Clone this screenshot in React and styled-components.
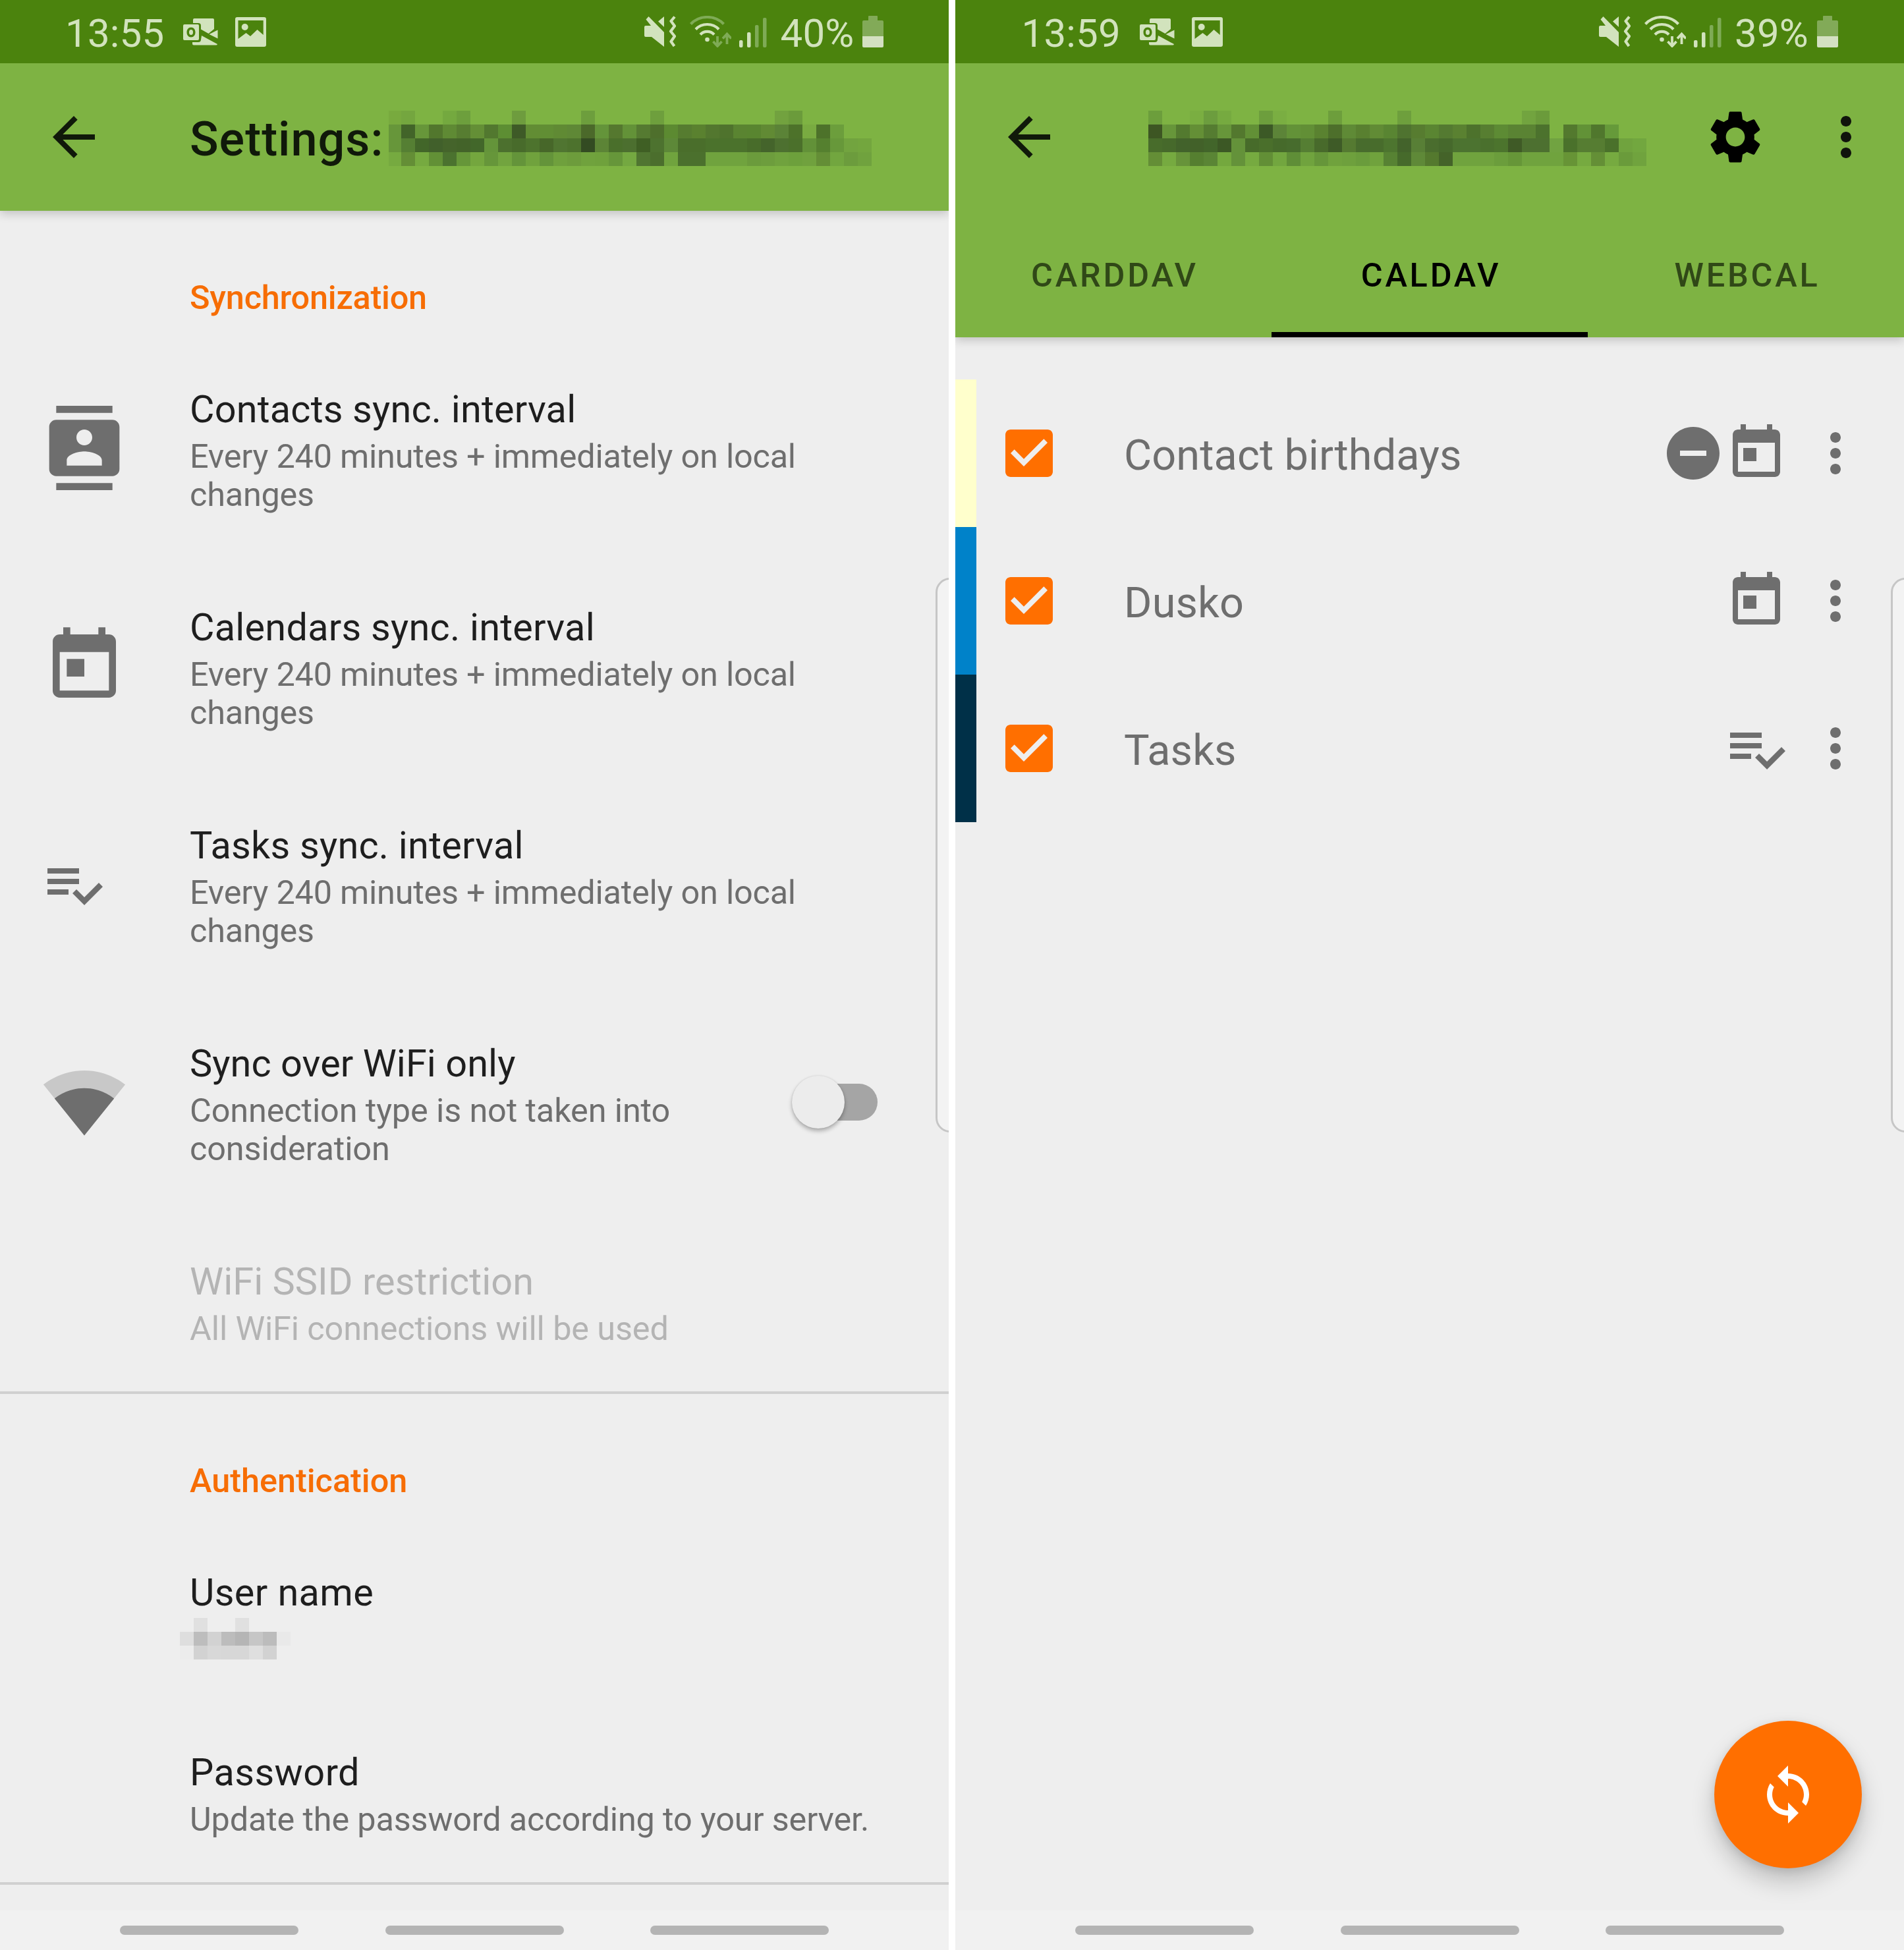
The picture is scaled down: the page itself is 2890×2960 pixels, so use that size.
import React from "react";
import styled, { createGlobalStyle } from "styled-components";

const GlobalStyle = createGlobalStyle`
  *, *::before, *::after { box-sizing: border-box; }
  body { margin: 0; background: #ffffff; }
  svg { display: block; flex: none; }
`;

const Screens = styled.main`
  display: flex;
  gap: 10px;
  width: 2890px;
  height: 2960px;
  font-family: Roboto, "Noto Sans", sans-serif;
  overflow: hidden;
`;

const Phone = styled.section`
  position: relative;
  display: flex;
  flex-direction: column;
  width: 1440px;
  height: 2960px;
  background: #eeeeee;
  overflow: hidden;
`;

/* Status bar */

const StatusBarRoot = styled.header`
  position: relative;
  z-index: 1;
  display: flex;
  align-items: center;
  flex: none;
  height: 96px;
  padding: 0 ${(p) => 99 + p.$inset}px 0 ${(p) => 99 + p.$inset}px;
  background: #4b830d;
  color: #d2e3bd;
`;

const StatusText = styled.span`
  width: ${(p) => p.$width}px;
  padding-top: 5px;
  font-size: 60px;
  line-height: 70px;
  letter-spacing: 0.2px;
  white-space: nowrap;
`;

const Notifications = styled.div`
  display: flex;
  align-items: center;
  gap: 26px;
  margin-left: 27px;
`;

const StatusIcons = styled.div`
  display: flex;
  align-items: center;
  margin-left: auto;
`;

const StatusGap = styled.i`
  width: ${(p) => p.$w}px;
`;

const DIM = "#7fab56";
const LIT = "#d2e3bd";

const OutlookIcon = () => (
  <svg width="53" height="41" viewBox="0 0 53 41" fill={LIT}>
    <path d="M15 2q0-2 2-2h28q2 0 2 2v14l-8.5 7L27 16.5V11q0-4-4-4h-8z" />
    <path fillRule="evenodd" d="M2 9h20q2 0 2 2v20q0 2-2 2H2q-2 0-2-2V11q0-2 2-2zm10 4.500c-4 0-6.500 3.200-6.500 7.500s2.500 7.500 6.500 7.500 6.500-3.200 6.500-7.500-2.500-7.500-6.500-7.500zm0 3.500c2 0 3 1.600 3 4s-1 4-3 4-3-1.600-3-4 1-4 3-4z" />
    <path d="M52.500 17.500v13L39.500 24z" />
    <path d="M28 26l24 13q-.5 1.500-2 1.500H16q-2 0-2-2V36h9q4 0 4-4z" />
  </svg>
);

const PictureIcon = () => (
  <svg width="47" height="45" viewBox="0 0 47 45" fill={LIT}>
    <path fillRule="evenodd" d="M3 0h41q3 0 3 3v39q0 3-3 3H3q-3 0-3-3V3q0-3 3-3zm1.500 5v28L16.500 24l6.500 5 10.500-10 9.200 8V5z" />
    <circle cx="14.700" cy="15" r="5" />
  </svg>
);

const VibrateIcon = () => (
  <svg width="48" height="48" viewBox="0 0 48 48" fill={LIT}>
    <path d="M2.500 5.500l4-4.500L30 25v22L11 32H2q-2 0-2-2V17q0-2 2-2h8z" />
    <path d="M30 1v16l-9-8.500z" />
    <path
      d="M46 1.500l-5.500 6.500 5.500 7.500-6 8 6 7.500-5.500 8 5 7"
      fill="none"
      stroke={LIT}
      strokeWidth="4.200"
      strokeLinejoin="round"
    />
  </svg>
);

const WifiStatusIcon = ({ full }) => {
  const faint = full ? LIT : DIM;
  return (
    <svg width="63" height="48" viewBox="0 0 63 48" fill="none" strokeWidth="4.200">
      <path d="M1.500 12.500C15-1.500 38-1.500 51.500 12.500" stroke={faint} />
      <path d="M9 20.500C18 10.500 35 10.500 44 20.500" stroke={LIT} />
      <path d="M16 28.500C21.500 22.300 31.500 22.300 37 28.500" stroke={LIT} />
      <circle cx="26.500" cy="36" r="3.300" fill={LIT} />
      <path d="M42 31v13M35.500 39l6.500 7 6.500-7" stroke={faint} strokeWidth="3.800" />
      <path d="M56.500 43V29M50 34.500l6.500-7 6.500 7" stroke={faint} strokeWidth="3.800" />
    </svg>
  );
};

const SignalIcon = () => (
  <svg width="42" height="48" viewBox="0 0 42 48">
    <rect x="0" y="37" width="5.500" height="11" rx="2" fill={LIT} />
    <rect x="12" y="25" width="5.500" height="23" rx="2" fill={LIT} />
    <rect x="24" y="14" width="5.500" height="34" rx="2" fill={DIM} />
    <rect x="36" y="3" width="5.500" height="45" rx="2" fill={DIM} />
  </svg>
);

const BatteryIcon = () => (
  <svg width="32" height="48" viewBox="0 0 32 48">
    <path d="M9 1q0-1 1-1h12q1 0 1 1v6h7q2 0 2 2v22H0V9q0-2 2-2h7z" fill="#82aa58" />
    <path d="M0 31h32v15q0 2-2 2H2q-2 0-2-2z" fill="#d4e0c2" />
  </svg>
);

const StatusBar = ({ time, battery, wifiFull, inset = 0 }) => (
  <StatusBarRoot $inset={inset}>
    <StatusText $width={152}>{time}</StatusText>
    <Notifications>
      <OutlookIcon />
      <PictureIcon />
    </Notifications>
    <StatusIcons>
      <VibrateIcon />
      <StatusGap $w={21} />
      <WifiStatusIcon full={wifiFull} />
      <StatusGap $w={12} />
      <SignalIcon />
      <StatusGap $w={20.5} />
      <StatusText $width={113}>{battery}</StatusText>
      <StatusGap $w={11.5} />
      <BatteryIcon />
    </StatusIcons>
  </StatusBarRoot>
);

/* Material icons on a 24-unit grid */

const paths = {
  back: "M20 11H7.830l5.590-5.590L12 4l-8 8 8 8 1.410-1.410L7.830 13H20v-2z",
  more: "M12 8c1.100 0 2-.9 2-2s-.9-2-2-2-2 .9-2 2 .9 2 2 2zm0 2c-1.100 0-2 .9-2 2s.9 2 2 2 2-.9 2-2-.9-2-2-2zm0 6c-1.100 0-2 .9-2 2s.9 2 2 2 2-.9 2-2-.9-2-2-2z",
  gear: "M19.140,12.940c0.040-0.300,0.060-0.610,0.060-0.940c0-0.320-0.020-0.640-0.070-0.940l2.030-1.580c0.180-0.140,0.230-0.410,0.120-0.610l-1.920-3.320c-0.120-0.220-0.370-0.290-0.590-0.220l-2.390,0.960c-0.500-0.380-1.030-0.700-1.620-0.940L14.400,2.810c-0.040-0.240-0.240-0.410-0.480-0.410h-3.840c-0.240,0-0.430,0.170-0.470,0.410L9.250,5.350C8.660,5.590,8.120,5.920,7.630,6.290L5.240,5.330c-0.220-0.080-0.470,0-0.590,0.220L2.740,8.870C2.620,9.080,2.660,9.340,2.860,9.480l2.030,1.580C4.840,11.360,4.800,11.690,4.800,12s0.020,0.640,0.070,0.940l-2.030,1.580c-0.180,0.140-0.230,0.410-0.120,0.610l1.920,3.320c0.120,0.220,0.370,0.290,0.590,0.220l2.390-0.960c0.500,0.380,1.030,0.700,1.620,0.940l0.360,2.540c0.050,0.240,0.240,0.410,0.480,0.410h3.840c0.240,0,0.440-0.170,0.470-0.410l0.360-2.540c0.590-0.240,1.130-0.560,1.620-0.940l2.390,0.960c0.220,0.080,0.470,0,0.590-0.220l1.920-3.320c0.120-0.220,0.070-0.470-0.120-0.610L19.140,12.940z M12,15.600c-1.980,0-3.600-1.620-3.600-3.600s1.620-3.600,3.600-3.600s3.600,1.620,3.600,3.600S13.980,15.600,12,15.600z",
  contacts:
    "M20 0H4v2h16V0zM4 24h16v-2H4v2zM20 4H4c-1.100 0-2 .9-2 2v12c0 1.100.9 2 2 2h16c1.100 0 2-.9 2-2V6c0-1.100-.9-2-2-2zm-8 2.750c1.240 0 2.250 1.010 2.250 2.250s-1.010 2.250-2.250 2.250S9.750 10.240 9.750 9 10.760 6.750 12 6.750zM17 17H7v-1.500c0-1.670 3.330-2.500 5-2.500s5 .83 5 2.500V17z",
  today:
    "M19 3h-1V1h-2v2H8V1H6v2H5c-1.110 0-1.990.9-1.990 2L3 19c0 1.100.89 2 2 2h14c1.100 0 2-.9 2-2V5c0-1.100-.9-2-2-2zm0 16H5V8h14v11zM7 10h5v5H7z",
  tasks:
    "M14 10H2v2h12v-2zm0-4H2v2h12V6zM2 16h8v-2H2v2zm19.500-4.500L23 13l-6.990 7-4.510-4.500L13 14l3.010 3 5.490-5.500z",
  readOnly:
    "M12 2C6.480 2 2 6.480 2 12s4.480 10 10 10 10-4.480 10-10S17.520 2 12 2zm5 11H7v-2h10v2z",
  checkbox:
    "M19 3H5c-1.110 0-2 .9-2 2v14c0 1.100.89 2 2 2h14c1.110 0 2-.9 2-2V5c0-1.100-.89-2-2-2zm-9 14l-5-5 1.410-1.410L10 14.170l7.590-7.590L19 8l-9 9z",
  sync: "M12 4V1L8 5l4 4V6c3.310 0 6 2.690 6 6 0 1.010-.25 1.970-.7 2.800l1.460 1.460C19.540 15.030 20 13.570 20 12c0-4.420-3.580-8-8-8zm0 14c-3.310 0-6-2.690-6-6 0-1.010.25-1.970.7-2.800L5.240 7.740C4.460 8.970 4 10.430 4 12c0 4.420 3.580 8 8 8v3l4-4-4-4v3z",
};

const Icon = ({ name, size = 96, color = "#6e6e6e" }) => (
  <svg width={size} height={size} viewBox="0 0 24 24" fill={color}>
    <path d={paths[name]} />
  </svg>
);

const WifiStrengthIcon = () => (
  <svg width="128" height="128" viewBox="0 0 24 24" fill="#6e6e6e">
    <path fill="#c8c8c8" d="M23.640 7c-.45-.34-4.930-4-11.640-4C5.280 3 .81 6.660.36 7l11.630 14.490.01.01.01-.01L23.640 7z" />
    <path d="M3.530 10.950l8.460 10.540.01.01.01-.01 8.460-10.540C20.040 10.620 16.810 8 12 8s-8.040 2.620-8.470 2.950z" />
  </svg>
);

/* Pixelated patches that hide private text */

const MosaicGrid = styled.div`
  display: grid;
  flex: none;
  grid-template-columns: ${(p) => p.$first}px repeat(${(p) => p.$cols - 1}, 21px);
  grid-auto-rows: 21px;
  margin-top: ${(p) => p.$top || 0}px;
  margin-left: ${(p) => p.$left || 0}px;
`;

const Mosaic = ({ rows, first = 21, left, top }) => {
  const grid = rows.map((row) => row.trim().split(/\s+/));
  return (
    <MosaicGrid $cols={grid[0].length} $first={first} $left={left} $top={top} aria-hidden="true">
      {grid.flat().map((c, i) => (
        <i key={i} style={{ background: c === "-" ? "none" : `#${c}` }} />
      ))}
    </MosaicGrid>
  );
};

const accountMosaicLeft = [
  "78aa3e 74a63f - - 74a93f 6d9f3d - - - 6e9c3e - - - - 6d9e3d - - - - 6e9f3d - - - - - - - - 72a23f 6b9b3b - - - - -",
  "67963a 426429 67963a 52772d 5f8a34 577d31 648f36 52782f 5d8e33 3e5a27 628d34 618e34 608a34 5f8836 4b692a 64943a 55782f 639238 557a31 4e6f2c 5c8a31 567c30 5a812f 53772f 4f732d 5a8431 598530 618a34 5b8337 4d722a 79ab41 4d722a 6c9e3c - -",
  "67963a 557f33 426629 41602b 45642b 436329 42672a 64943a 4c702e 486b2b 4d732d 476729 507531 4d722d 334b22 5c8436 4a6f2b 4c6f2f 3f5f24 4d722f 5d8838 4a6e2b 4a6e2b 4b722c 4b722c 4b722c 486c2a 44642b 4d7030 4b702b 629138 55802f 67983a 72a43f 73a63e",
  "76aa40 648e36 76aa40 629036 4b722f 669639 74a63e 66963a 72a43f 64943a 70a23d 64943a 6fa03d 6d9c3c 70a23d 6fa13c 66963a 74a841 507531 4b6e2d 70a33e 4b702d 4b702d 70a33e 70a33e 70a33e 6b9b3c 6d9d3d 70a23e 6da03c 70a13e 648e36 72a63f 6c9c3d 70a23e",
];

const accountMosaicRight = [
  "6c9e3c - - 7aae41 6c9d3e 76aa40 - - 6d9e3d 7aae42 - - - 6d9e3c - - - - 6e9f3d - - - - - - - - 72a43f 6b9b3b - - - - - - -",
  "3d5623 67963a 537a2f 648f36 557c31 67963a 53782e 629036 3c5926 5c8438 639238 628f36 5a8230 4d6f2b 5f8a36 598030 618b35 598532 4f7330 577c30 5a8532 547a31 5a8131 4d722c 577e31 5d8b34 5a8333 5a8333 4c722d - 53792e 629237 50772d 669a3a - -",
  "486c2b 46692b 42622b 426129 42652a 3c5825 64923a 476b2a 4a6f2b 466a2b 476c2d 557e33 486a2b 3e5b27 557a31 486c2d 486c2c 4d752f 43632b 587f36 4a6d2e 46692c 4c7330 4c7330 4a702d 4c742d 3f5a26 4d7030 4d7030 71a341 4a712b 567d32 567d32 4a712b 70a33e 72a73f",
  "648e36 76aa40 67933a 557f30 5a8535 74a83e 64923a 76aa40 628f36 72a63f 5f8e37 70a33e 66963a 70a23d 6ea03d 6a9c3c 70a23d 578233 466a2b 5f8938 54792e 446329 70a33e 70a33e 70a23e 6b9d3c 669638 70a33e 70a33e 70a33e 679436 76aa40 648f36 76aa40 6a9b3b 70a33e",
];

const userMosaic = [
  "- e0e0e0 - - e0e0e0 - - -",
  "dedede bdbdbd d2d2d2 bcbcbc b5b5b5 c6c6c6 bcbcbc e9e9e9",
  "ececec d2d2d2 d8d8d8 d7d7d7 d7d7d7 dfdfdf d2d2d2 -",
];

/* App bar and tabs */

const AppHeader = styled.div`
  position: relative;
  flex: none;
  background: #7eb343;
  box-shadow: 0 4px 14px rgba(0, 0, 0, 0.2);
`;

const Toolbar = styled.div`
  display: flex;
  align-items: center;
  height: 224px;
  padding: 0 40px 0 64px;
`;

const ToolbarTitle = styled.h1`
  display: flex;
  align-items: center;
  margin: 4px 0 0 128px;
  font-size: 72px;
  line-height: 84px;
  font-weight: 500;
  letter-spacing: 1px;
  color: #10190a;
  white-space: nowrap;
`;

const TitleText = styled.span`
  width: 302px;
  padding-top: 3px;
`;

const ToolbarActions = styled.div`
  display: flex;
  gap: 72px;
  margin-left: auto;
`;

const Tabs = styled.nav`
  display: grid;
  grid-template-columns: repeat(3, 480px);
  height: 192px;
`;

const Tab = styled.a`
  display: flex;
  align-items: center;
  justify-content: center;
  padding: 11px 0 0 4px;
  border-bottom: 8px solid ${(p) => (p.$active ? "#000000" : "transparent")};
  color: ${(p) => (p.$active ? "#000000" : "#304817")};
  font-size: 50.4px;
  font-weight: 500;
  letter-spacing: 3.8px;
`;

/* Settings list */

const Body = styled.div`
  display: flex;
  flex-direction: column;
  flex: 1;
  min-height: 0;
`;

const Category = styled.h2`
  flex: none;
  height: 194px;
  margin: 0;
  padding: 103px 0 0 288px;
  font-size: 50.4px;
  line-height: 58px;
  font-weight: 500;
  letter-spacing: ${(p) => p.$tracking || 0}px;
  color: #f76d04;
`;

const Preference = styled.div`
  display: grid;
  grid-template-columns: 224px 1fr auto;
  align-items: center;
  flex: none;
  height: ${(p) => (p.$lines === 2 ? 331 : 273.5)}px;
  padding: 0 108px 0 64px;
`;

const PreferenceText = styled.div`
  align-self: start;
  padding-top: 74px;
`;

const PreferenceTitle = styled.div`
  font-size: 57.6px;
  line-height: 68px;
  letter-spacing: ${(p) => p.$tracking}px;
  color: ${(p) => (p.$disabled ? "#b4b4b4" : "#1e1e1e")};
`;

const PreferenceSummary = styled.div`
  margin: 8px 0 0;
  max-width: 1060px;
  font-size: 50.4px;
  line-height: 58px;
  letter-spacing: ${(p) => p.$tracking}px;
  color: ${(p) => (p.$disabled ? "#b4b4b4" : "#6e6e6e")};
`;

const MosaicSlot = styled.div`
  padding-top: 4px;
`;

const Divider = styled.hr`
  flex: none;
  width: 100%;
  height: 4px;
  margin: 0;
  border: 0;
  background: #d0d0d0;
`;

const SwitchTrack = styled.div`
  display: flex;
  align-items: center;
  width: 124px;
  height: 56px;
  border-radius: 28px;
  background: #a5a5a5;
`;

const SwitchThumb = styled.div`
  flex: none;
  width: 80px;
  height: 80px;
  margin-left: -6px;
  border-radius: 50%;
  background: #ececec;
  box-shadow: 0 4px 6px rgba(0, 0, 0, 0.28), 0 0 3px rgba(0, 0, 0, 0.1);
`;

const Setting = ({
  icon,
  title,
  summary,
  lines = 2,
  disabled,
  control,
  titleTracking = 0.2,
  summaryTracking = -0.12,
  children,
}) => (
  <Preference $lines={lines}>
    <div>{icon}</div>
    <PreferenceText>
      <PreferenceTitle $disabled={disabled} $tracking={titleTracking}>
        {title}
      </PreferenceTitle>
      {summary && (
        <PreferenceSummary $disabled={disabled} $tracking={summaryTracking}>
          {summary}
        </PreferenceSummary>
      )}
      {children}
    </PreferenceText>
    {control}
  </Preference>
);

/* Collection list */

const Collections = styled.div`
  display: flex;
  flex-direction: column;
  padding-top: 64px;
`;

const CollectionRow = styled.div`
  display: flex;
  align-items: center;
  height: 224px;
  padding-right: 56px;
`;

const ColorStrip = styled.i`
  align-self: stretch;
  width: 32px;
  margin-right: 32px;
  background: ${(p) => p.$color};
`;

const CollectionName = styled.span`
  flex: 1;
  padding: 6px 0 0 96px;
  font-size: 64.8px;
  line-height: 76px;
  letter-spacing: 0.12px;
  color: #6e6e6e;
`;

const RowIcons = styled.div`
  display: flex;
  margin-right: 24px;
`;

const collections = [
  { name: "Contact birthdays", color: "#ffffcc", icons: ["readOnly", "today"] },
  { name: "Dusko", color: "#0082c9", icons: ["today"] },
  { name: "Tasks", color: "#003048", icons: ["tasks"] },
];

const Fab = styled.button`
  position: absolute;
  right: 64px;
  bottom: 124px;
  display: flex;
  align-items: center;
  justify-content: center;
  width: 224px;
  height: 224px;
  padding: 0;
  border: 0;
  border-radius: 50%;
  background: #ff6f00;
  box-shadow: 0 20px 36px rgba(0, 0, 0, 0.2), 0 4px 14px rgba(0, 0, 0, 0.1);
`;

/* System overlays */

const EdgeHandle = styled.div`
  position: absolute;
  top: 877px;
  right: -30px;
  width: 50px;
  height: 842px;
  border: 3px solid #c6c6c6;
  border-radius: 22px;
  background: #f3f3f3;
`;

const NavBar = styled.footer`
  display: flex;
  justify-content: center;
  gap: 131.5px;
  flex: none;
  height: 60px;
  padding-top: 23px;
  background: #f1f1f1;
`;

const NavPill = styled.i`
  width: 271px;
  height: 14px;
  border-radius: 7px;
  background: #b4b4b4;
`;

const Navigation = () => (
  <NavBar>
    <NavPill />
    <NavPill />
    <NavPill />
  </NavBar>
);

const SyncInterval = ({ icon, title, titleTracking }) => (
  <Setting
    icon={icon}
    title={title}
    titleTracking={titleTracking}
    summary="Every 240 minutes + immediately on local changes"
    summaryTracking={-0.21}
  />
);

const SettingsScreen = () => (
  <Phone>
    <StatusBar time="13:55" battery="40%" />
    <AppHeader>
      <Toolbar>
        <Icon name="back" color="#10190a" />
        <ToolbarTitle>
          <TitleText>Settings:</TitleText>
          <Mosaic rows={accountMosaicLeft} first={19} />
        </ToolbarTitle>
      </Toolbar>
    </AppHeader>
    <Body>
      <Category $tracking={-0.2}>Synchronization</Category>
      <SyncInterval icon={<Icon name="contacts" size={128} />} title="Contacts sync. interval" />
      <SyncInterval icon={<Icon name="today" size={128} />} title="Calendars sync. interval" titleTracking={0.25} />
      <SyncInterval icon={<Icon name="tasks" />} title="Tasks sync. interval" titleTracking={0.25} />
      <Setting
        icon={<WifiStrengthIcon />}
        title="Sync over WiFi only"
        titleTracking={0.07}
        summary="Connection type is not taken into consideration"
        control={
          <SwitchTrack>
            <SwitchThumb />
          </SwitchTrack>
        }
      />
      <Setting
        lines={1}
        disabled
        title="WiFi SSID restriction"
        titleTracking={0.07}
        summary="All WiFi connections will be used"
      />
      <Divider />
      <Category>Authentication</Category>
      <Setting lines={1} title="User name" titleTracking={0.4}>
        <MosaicSlot>
          <Mosaic rows={userMosaic} left={-15} />
        </MosaicSlot>
      </Setting>
      <Setting
        lines={1}
        title="Password"
        titleTracking={0.45}
        summary="Update the password according to your server."
        summaryTracking={-0.15}
      />
      <Divider />
    </Body>
    <Navigation />
    <EdgeHandle />
  </Phone>
);

const CollectionsScreen = () => (
  <Phone>
    <StatusBar time="13:59" battery="39%" wifiFull inset={1.5} />
    <AppHeader>
      <Toolbar>
        <Icon name="back" color="#10190a" />
        <Mosaic rows={accountMosaicRight} left={133} top={4} />
        <ToolbarActions>
          <Icon name="gear" color="#000000" />
          <Icon name="more" color="#10140c" />
        </ToolbarActions>
      </Toolbar>
      <Tabs>
        <Tab>CARDDAV</Tab>
        <Tab $active>CALDAV</Tab>
        <Tab>WEBCAL</Tab>
      </Tabs>
    </AppHeader>
    <Body>
      <Collections>
        {collections.map((c) => (
          <CollectionRow key={c.name}>
            <ColorStrip $color={c.color} />
            <Icon name="checkbox" color="#ff6f00" />
            <CollectionName>{c.name}</CollectionName>
            <RowIcons>
              {c.icons.map((name) => (
                <Icon key={name} name={name} />
              ))}
            </RowIcons>
            <Icon name="more" />
          </CollectionRow>
        ))}
      </Collections>
    </Body>
    <Navigation />
    <EdgeHandle />
    <Fab aria-label="Synchronize now">
      <Icon name="sync" color="#ffffff" />
    </Fab>
  </Phone>
);

export default function App() {
  return (
    <>
      <GlobalStyle />
      <Screens>
        <SettingsScreen />
        <CollectionsScreen />
      </Screens>
    </>
  );
}
